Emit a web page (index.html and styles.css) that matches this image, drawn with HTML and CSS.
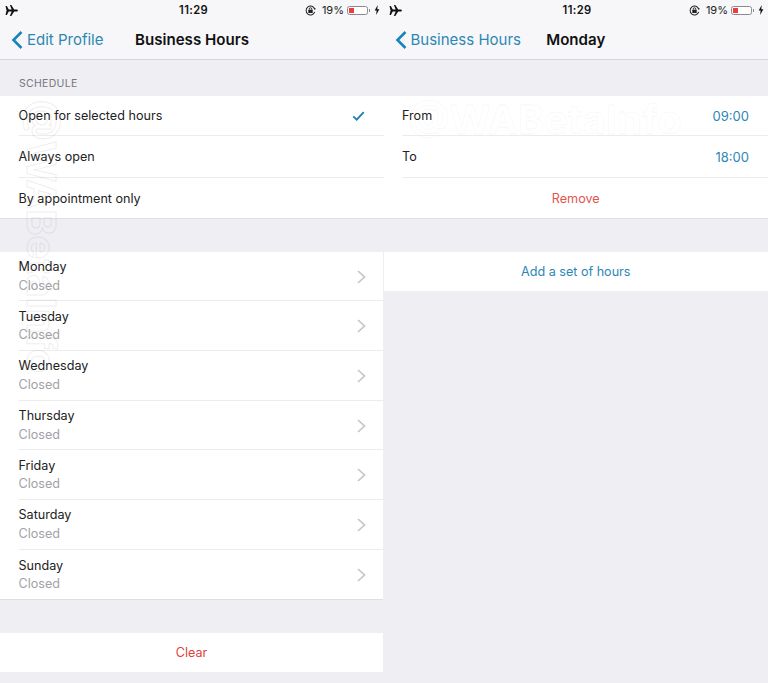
FILE: index.html
```html
<!DOCTYPE html>
<html lang="en">
<head>
    <meta charset="UTF-8">
    <title>Business Hours</title>
    <link rel="stylesheet" href="styles.css">
</head>
<body>
    <div class="screens">

        <!-- Business hours list -->
        <div class="pane">
            <div class="status-bar">
                <svg class="plane" viewBox="0 0 14 12"><path d="M0.5 1.2 L2 1.2 L4 4.8 L7.2 4.8 L5.2 0 L6.8 0 L9.9 4.8 L12.2 4.8 C13.4 4.8 14 5.4 14 6 C14 6.6 13.4 7.2 12.2 7.2 L9.9 7.2 L6.8 12 L5.2 12 L7.2 7.2 L4 7.2 L2 10.8 L0.5 10.8 L1.6 6 Z"/></svg>
                <span class="clock">11:29</span>
                <div class="status-right">
                    <svg class="lock" viewBox="0 0 12 12"><path d="M10.6 7.4 A4.8 4.8 0 1 1 10.6 4.6" fill="none" stroke="#222" stroke-width="1.1"/><path d="M9.4 3.4 L11.6 3.6 L10.9 5.8 Z" fill="#222"/><rect x="3.6" y="5.2" width="4.8" height="3.6" rx="0.6" fill="#222"/><path d="M4.6 5.2 V4.4 a1.4 1.4 0 0 1 2.8 0 V5.2" fill="none" stroke="#222"/></svg>
                    <span class="percent">19%</span>
                    <div class="battery"><div class="battery-level"></div></div>
                    <div class="battery-tip"></div>
                    <svg class="bolt" viewBox="0 0 6 11"><path d="M3.8 0 L0.4 6 L2.6 6 L2 11 L5.6 4.6 L3.3 4.6 Z"/></svg>
                </div>
            </div>
            <div class="nav-bar">
                <div class="nav-left">
                    <svg class="chevron-back" viewBox="0 0 13 20"><path d="M10.5 2 L2.5 10 L10.5 18"/></svg>
                    <span class="nav-back">Edit Profile</span>
                </div>
                <span class="nav-title">Business Hours</span>
            </div>

            <div class="section-label">SCHEDULE</div>
            <div class="group">
                <div class="row">Open for selected hours
                    <svg class="check" viewBox="0 0 14 11"><path d="M1.2 6 L5 9.5 L12.8 1.2"/></svg>
                </div>
                <div class="row">Always open</div>
                <div class="row">By appointment only</div>
            </div>

            <div class="group days">
                <div class="day-row"><div><div>Monday</div><div class="closed">Closed</div></div><svg class="chevron" viewBox="0 0 9 14"><path d="M1 1 L7.5 7 L1 13"/></svg></div>
                <div class="day-row"><div><div>Tuesday</div><div class="closed">Closed</div></div><svg class="chevron" viewBox="0 0 9 14"><path d="M1 1 L7.5 7 L1 13"/></svg></div>
                <div class="day-row"><div><div>Wednesday</div><div class="closed">Closed</div></div><svg class="chevron" viewBox="0 0 9 14"><path d="M1 1 L7.5 7 L1 13"/></svg></div>
                <div class="day-row"><div><div>Thursday</div><div class="closed">Closed</div></div><svg class="chevron" viewBox="0 0 9 14"><path d="M1 1 L7.5 7 L1 13"/></svg></div>
                <div class="day-row"><div><div>Friday</div><div class="closed">Closed</div></div><svg class="chevron" viewBox="0 0 9 14"><path d="M1 1 L7.5 7 L1 13"/></svg></div>
                <div class="day-row"><div><div>Saturday</div><div class="closed">Closed</div></div><svg class="chevron" viewBox="0 0 9 14"><path d="M1 1 L7.5 7 L1 13"/></svg></div>
                <div class="day-row"><div><div>Sunday</div><div class="closed">Closed</div></div><svg class="chevron" viewBox="0 0 9 14"><path d="M1 1 L7.5 7 L1 13"/></svg></div>
            </div>

            <div class="action clear">Clear</div>

            <div class="watermark watermark-side">@WABetaInfo</div>
        </div>

        <!-- Monday detail -->
        <div class="pane">
            <div class="status-bar">
                <svg class="plane" viewBox="0 0 14 12"><path d="M0.5 1.2 L2 1.2 L4 4.8 L7.2 4.8 L5.2 0 L6.8 0 L9.9 4.8 L12.2 4.8 C13.4 4.8 14 5.4 14 6 C14 6.6 13.4 7.2 12.2 7.2 L9.9 7.2 L6.8 12 L5.2 12 L7.2 7.2 L4 7.2 L2 10.8 L0.5 10.8 L1.6 6 Z"/></svg>
                <span class="clock">11:29</span>
                <div class="status-right">
                    <svg class="lock" viewBox="0 0 12 12"><path d="M10.6 7.4 A4.8 4.8 0 1 1 10.6 4.6" fill="none" stroke="#222" stroke-width="1.1"/><path d="M9.4 3.4 L11.6 3.6 L10.9 5.8 Z" fill="#222"/><rect x="3.6" y="5.2" width="4.8" height="3.6" rx="0.6" fill="#222"/><path d="M4.6 5.2 V4.4 a1.4 1.4 0 0 1 2.8 0 V5.2" fill="none" stroke="#222"/></svg>
                    <span class="percent">19%</span>
                    <div class="battery"><div class="battery-level"></div></div>
                    <div class="battery-tip"></div>
                    <svg class="bolt" viewBox="0 0 6 11"><path d="M3.8 0 L0.4 6 L2.6 6 L2 11 L5.6 4.6 L3.3 4.6 Z"/></svg>
                </div>
            </div>
            <div class="nav-bar">
                <div class="nav-left">
                    <svg class="chevron-back" viewBox="0 0 13 20"><path d="M10.5 2 L2.5 10 L10.5 18"/></svg>
                    <span class="nav-back">Business Hours</span>
                </div>
                <span class="nav-title">Monday</span>
            </div>

            <div class="spacer"></div>
            <div class="group">
                <div class="row">From <span class="time">09:00</span></div>
                <div class="row">To <span class="time">18:00</span></div>
                <div class="action remove">Remove</div>
            </div>

            <div class="action add">Add a set of hours</div>

            <div class="watermark watermark-top">@WABetaInfo</div>
        </div>

    </div>
</body>
</html>
```

FILE: styles.css
```css
body {
    margin: 0;
    background-color: #eeeef3;
    font-family: Inter, "Liberation Sans", sans-serif;
    font-size: 12.6px;
    color: #222;
}

.screens {
    display: flex;
    height: 683px;
    overflow: hidden;
}

.pane {
    position: relative;
    width: 384px;
    flex: none;
}

.pane + .pane {
    width: 384.5px;
    margin-left: -0.5px;
}

/* top bars */
.status-bar {
    display: flex;
    align-items: center;
    justify-content: space-between;
    height: 20px;
    padding: 0 4px 0 5px;
    background-color: #f7f7f9;
    position: relative;
}

.plane {
    width: 13px;
    height: 11px;
    fill: #111;
}

.clock {
    position: absolute;
    left: 179px;
    font-size: 11.2px;
    font-weight: 600;
    letter-spacing: 0.4px;
    color: #111;
}

.status-right {
    display: flex;
    align-items: center;
}

.lock {
    width: 11px;
    height: 11px;
    margin-right: 6px;
}

.percent {
    font-size: 11px;
    color: #222;
    margin-right: 3px;
}

.battery {
    width: 21px;
    height: 9px;
    border: 1px solid #8a8a8e;
    border-radius: 2.5px;
    padding: 1px;
    box-sizing: border-box;
    display: flex;
    background-color: #fff;
}

.battery-level {
    width: 5px;
    background-color: #ee3b3b;
}

.battery-tip {
    width: 1px;
    height: 3px;
    background-color: #8a8a8e;
    margin-left: 1px;
    margin-right: 4px;
}

.bolt {
    width: 6px;
    height: 10px;
    fill: #111;
}

.nav-bar {
    display: grid;
    grid-template-columns: 1fr auto 1fr;
    align-items: center;
    height: 39px;
    background-color: #f7f7f9;
    border-bottom: 1px solid #d6d6da;
    padding: 0 11px;
}

.nav-left {
    display: flex;
    align-items: center;
}

.chevron-back {
    width: 13px;
    height: 20px;
    fill: none;
    stroke: #1a84b8;
    stroke-width: 2.6;
    margin-right: 3px;
    flex: none;
}

.nav-back {
    font-size: 15px;
    color: #2d87b4;
    white-space: nowrap;
}

.nav-title {
    font-size: 15.1px;
    font-weight: 600;
    color: #111;
}

/* groups and rows */
.section-label {
    height: 36px;
    line-height: 47px;
    padding-left: 19px;
    box-sizing: border-box;
    font-size: 10.5px;
    letter-spacing: 0.3px;
    color: #77777c;
}

.spacer {
    height: 36px;
}

.group {
    background-color: #fff;
    border-bottom: 1px solid #dfdfe3;
}

.row {
    display: flex;
    align-items: center;
    justify-content: space-between;
    height: 41px;
    margin-left: 18.5px;
    padding-right: 19px;
    box-sizing: border-box;
    border-bottom: 1px solid #ececef;
}

.group > .row:first-child {
    height: 40px;
}

.group > .row:nth-child(2) {
    height: 42px;
}

.group > .row:nth-child(3) {
    border-bottom: none;
    height: 40px;
}

.check {
    width: 13px;
    height: 10px;
    fill: none;
    stroke: #1f80ad;
    stroke-width: 2;
}

.time {
    font-size: 13px;
    color: #2d87b4;
}

.days {
    margin-top: 32.5px;
    margin-right: 1px;
}

.day-row {
    display: flex;
    align-items: center;
    justify-content: space-between;
    height: 49.7px;
    margin-left: 18.5px;
    padding-top: 1.5px;
    padding-right: 17.5px;
    box-sizing: border-box;
    border-bottom: 1px solid #ececef;
    line-height: 18.7px;
}

.day-row:last-child {
    border-bottom: none;
}

.closed {
    color: #a2a2a6;
}

.chevron {
    width: 9px;
    height: 14px;
    fill: none;
    stroke: #c5c5ca;
    stroke-width: 1.7;
}

.action {
    display: flex;
    align-items: center;
    justify-content: center;
    height: 39.5px;
    background-color: #fff;
}

.clear {
    height: 39px;
    margin-top: 33px;
    margin-right: 1px;
    color: #e0413c;
}

.remove {
    height: 40px;
    color: #df5550;
}

.add {
    margin-top: 32.5px;
    color: #2d87b4;
}

/* faint overlay text */
.watermark {
    position: absolute;
    font-size: 40px;
    font-weight: 700;
    white-space: nowrap;
    pointer-events: none;
}

.watermark-side {
    top: 100px;
    left: 66px;
    transform-origin: 0 0;
    transform: rotate(90deg);
    color: rgba(120, 120, 130, 0.02);
    -webkit-text-stroke: 1px rgba(120, 120, 130, 0.14);
}

.watermark-top {
    top: 95px;
    left: 25px;
    color: rgba(120, 120, 130, 0.01);
    -webkit-text-stroke: 1px rgba(120, 120, 130, 0.06);
}
```
